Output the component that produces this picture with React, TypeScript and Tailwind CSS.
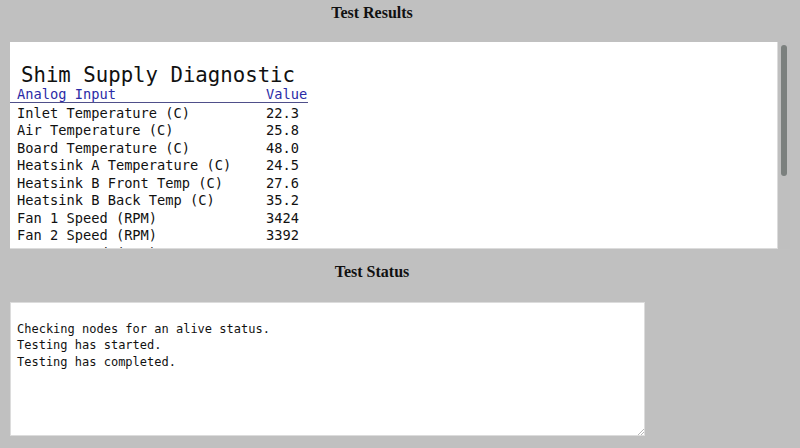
import React from 'react';

const readings: { label: string; value: string }[] = [
  { label: 'Inlet Temperature (C)', value: '22.3' },
  { label: 'Air Temperature (C)', value: '25.8' },
  { label: 'Board Temperature (C)', value: '48.0' },
  { label: 'Heatsink A Temperature (C)', value: '24.5' },
  { label: 'Heatsink B Front Temp (C)', value: '27.6' },
  { label: 'Heatsink B Back Temp (C)', value: '35.2' },
  { label: 'Fan 1 Speed (RPM)', value: '3424' },
  { label: 'Fan 2 Speed (RPM)', value: '3392' },
  { label: 'Fan 3 Speed (RPM)', value: '3360' },
];

const statusLines = ['', 'Checking nodes for an alive status.', 'Testing has started.', 'Testing has completed.'];

const mono = "font-['DejaVu_Sans_Mono','Liberation_Mono',monospace]";
const serif = "font-['Liberation_Serif','Times_New_Roman',serif]";

const App: React.FC = () => {
  return (
    <div className="h-[448px] w-[800px] overflow-hidden bg-[#c0c0c0] text-[#111]">
      <div className={`h-[42px] w-[744px] pt-[5px] text-center text-[16px] font-bold leading-[16px] ${serif}`}>
        Test Results
      </div>

      <div className="ml-[10px] flex h-[207px] w-[780px]">
        <div className={`h-full w-[768px] overflow-hidden border-b border-r border-[#dcdcdc] bg-white ${mono}`}>
          <div className="ml-[11px] mt-[21px] h-[24px] text-[20.7px] leading-[24px]">Shim Supply Diagnostic</div>
          <div className="w-[298px]">
            <div className="flex h-[15.5px] border-b-[1.5px] border-[#4f4f8a] text-[13.7px] leading-[14px] text-[#2b2ba6]">
              <span className="w-[256px] pl-[7px]">Analog Input</span>
              <span>Value</span>
            </div>
            <div className="mt-[2px]">
              {readings.map((r) => (
                <div key={r.label} className="flex h-[17.5px] text-[13.7px] leading-[17.5px]">
                  <span className="w-[256px] pl-[7px]">{r.label}</span>
                  <span>{r.value}</span>
                </div>
              ))}
            </div>
          </div>
        </div>
        <div className="relative h-full w-[12px] bg-[#bfbfbf]">
          <div className="absolute left-[3px] top-[3px] h-[131px] w-[6px] rounded-full bg-[#7b807e]" />
        </div>
      </div>

      <div className={`h-[53px] w-[744px] pt-[15px] text-center text-[16px] font-bold leading-[16px] ${serif}`}>
        Test Status
      </div>

      <div className={`relative ml-[10px] h-[134px] w-[635px] border border-[#dcdcdc] bg-white pl-[6px] pt-[1px] text-[12px] leading-[16.5px] ${mono}`}>
        {statusLines.map((line, i) => (
          <div key={i} className="h-[16.5px] whitespace-pre">
            {line}
          </div>
        ))}
        <svg className="absolute -bottom-[1px] -right-[1px]" width="10" height="10" viewBox="0 0 10 10">
          <path d="M9 3 L3 9 M9 6 L6 9" stroke="#b8b8b8" strokeWidth="1" />
        </svg>
      </div>
    </div>
  );
};

export default App;
